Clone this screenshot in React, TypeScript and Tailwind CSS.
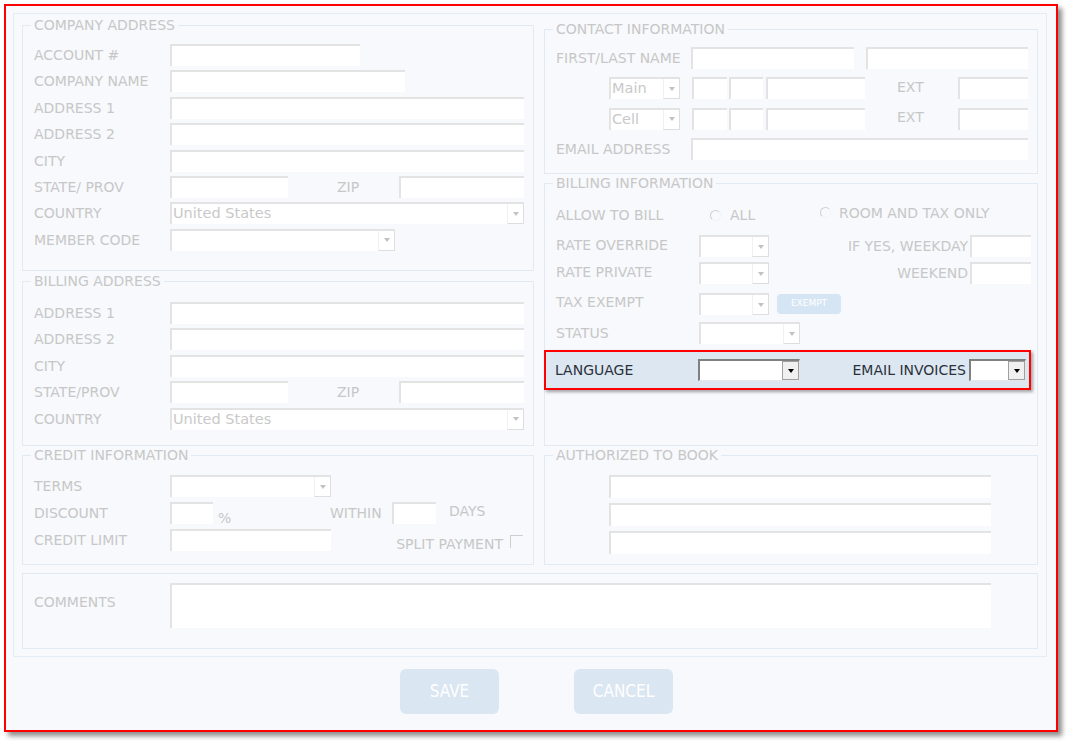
import clsx from "clsx";
import type { ReactNode } from "react";

const Label = ({ children, className }: { children: ReactNode; className?: string }) => (
  <span className={clsx("whitespace-nowrap text-[14px] leading-none text-[#c7c7c7]", className)}>{children}</span>
);

const Box = ({ className }: { className?: string }) => (
  <div className={clsx("h-[22px] shrink-0 border-t-2 border-l-2 border-[#e3e3e3] bg-white", className)} />
);

const Select = ({ value, className }: { value?: string; className?: string }) => (
  <div className={clsx("flex h-[22px] shrink-0 border-t-2 border-l-2 border-[#e3e3e3] bg-white", className)}>
    <span className="flex-1 pl-[1px] text-[14.5px] leading-[19px] text-[#c9c9c9]">{value}</span>
    <span className="flex w-[17px] items-center justify-center border-r border-b border-l border-[#dedede] border-l-[#f1f1f1]">
      <span className="border-x-[3.5px] border-t-[4px] border-x-transparent border-t-[#c2c2c2]" />
    </span>
  </div>
);

const DarkSelect = ({ className }: { className?: string }) => (
  <div className={clsx("flex h-[22px] shrink-0 border-t-2 border-l-2 border-[#808080] border-r border-b border-r-[#e6e6e6] border-b-[#e6e6e6] bg-white", className)}>
    <span className="flex-1" />
    <span className="flex w-[17px] items-center justify-center border border-[#a0a0a0] bg-[#f0f0f0]">
      <span className="border-x-[3.5px] border-t-[4px] border-x-transparent border-t-black" />
    </span>
  </div>
);

const Radio = () => (
  <span className="inline-block h-[11px] w-[11px] shrink-0 rounded-full border border-[#cfcfcf] border-r-[#f3f3f3] border-b-[#f3f3f3]" />
);

const Group = ({ title, className, children }: { title?: string; className?: string; children: ReactNode }) => (
  <fieldset className={clsx("min-w-0 border border-[#e1e9f3] pl-[11px] pr-[9px]", className)}>
    {title && (
      <legend className="-ml-[3px] px-[3px] text-[14px] leading-[14px] text-[#c7c7c7]">{title}</legend>
    )}
    {children}
  </fieldset>
);

const Row = ({ children, className }: { children: ReactNode; className?: string }) => (
  <div className={clsx("flex h-[22px] items-center", className)}>{children}</div>
);

export default function App() {
  return (
    <div className="h-[746px] w-[1071px] bg-white pl-[4px] pt-[4px] font-['DejaVu_Sans','Verdana',sans-serif]">
      <div className="h-[728px] w-[1054px] border-2 border-[#ff0000] bg-[#f7f9fc] pl-[7px] pt-[7px] shadow-[4px_4px_5px_rgba(0,0,0,0.45)]">
        <div className="h-[644px] w-[1034px] border border-[#e4ecf5] px-[8px]">
          <div className="flex gap-[10px]">
            {/* left column */}
            <div className="flex w-[512px] flex-col pt-[4px]">
              <Group title="COMPANY ADDRESS" className="h-[253px]">
                <div className="flex flex-col gap-[4.4px] pt-[12px]">
                  <Row>
                    <Label className="w-[136px]">ACCOUNT #</Label>
                    <Box className="w-[190px]" />
                  </Row>
                  <Row>
                    <Label className="w-[136px]">COMPANY NAME</Label>
                    <Box className="w-[235px]" />
                  </Row>
                  <Row>
                    <Label className="w-[136px]">ADDRESS 1</Label>
                    <Box className="w-[354px]" />
                  </Row>
                  <Row>
                    <Label className="w-[136px]">ADDRESS 2</Label>
                    <Box className="w-[354px]" />
                  </Row>
                  <Row>
                    <Label className="w-[136px]">CITY</Label>
                    <Box className="w-[354px]" />
                  </Row>
                  <Row>
                    <Label className="w-[136px]">STATE/ PROV</Label>
                    <Box className="w-[118px]" />
                    <Label className="w-[111px] pl-[49px]">ZIP</Label>
                    <Box className="w-[125px]" />
                  </Row>
                  <Row>
                    <Label className="w-[136px]">COUNTRY</Label>
                    <Select value="United States" className="w-[354px]" />
                  </Row>
                  <Row>
                    <Label className="w-[136px]">MEMBER CODE</Label>
                    <Select className="w-[225px]" />
                  </Row>
                </div>
              </Group>

              <Group title="BILLING ADDRESS" className="mt-[3px] h-[172px]">
                <div className="flex flex-col gap-[4.4px] pt-[14px]">
                  <Row>
                    <Label className="w-[136px]">ADDRESS 1</Label>
                    <Box className="w-[354px]" />
                  </Row>
                  <Row>
                    <Label className="w-[136px]">ADDRESS 2</Label>
                    <Box className="w-[354px]" />
                  </Row>
                  <Row>
                    <Label className="w-[136px]">CITY</Label>
                    <Box className="w-[354px]" />
                  </Row>
                  <Row>
                    <Label className="w-[136px]">STATE/PROV</Label>
                    <Box className="w-[118px]" />
                    <Label className="w-[111px] pl-[49px]">ZIP</Label>
                    <Box className="w-[125px]" />
                  </Row>
                  <Row>
                    <Label className="w-[136px]">COUNTRY</Label>
                    <Select value="United States" className="w-[354px]" />
                  </Row>
                </div>
              </Group>

              <Group title="CREDIT INFORMATION" className="mt-[2px] h-[117px]">
                <div className="flex flex-col gap-[5px] pt-[13px]">
                  <Row>
                    <Label className="w-[136px]">TERMS</Label>
                    <Select className="w-[161px]" />
                  </Row>
                  <Row>
                    <Label className="w-[136px]">DISCOUNT</Label>
                    <Box className="w-[43px]" />
                    <Label className="mt-[10px] w-[117px] pl-[5px]">%</Label>
                    <Label className="w-[62px]">WITHIN</Label>
                    <Box className="w-[44px]" />
                    <Label className="-mt-[4px] pl-[13px]">DAYS</Label>
                  </Row>
                  <Row>
                    <Label className="w-[136px]">CREDIT LIMIT</Label>
                    <Box className="w-[161px]" />
                    <Label className="ml-auto mt-[7px]">SPLIT PAYMENT</Label>
                    <span className="mt-[3px] ml-[7px] mr-[1px] h-[13px] w-[13px] border-t border-l border-[#cfcfcf]" />
                  </Row>
                </div>
              </Group>
            </div>

            {/* right column */}
            <div className="flex w-[494px] flex-col pt-[8px]">
              <Group title="CONTACT INFORMATION" className="h-[152px]">
                <div className="flex flex-col gap-[8.3px] pt-[11px]">
                  <Row>
                    <Label className="w-[136px]">FIRST/LAST NAME</Label>
                    <Box className="w-[163px]" />
                    <Box className="ml-[12px] w-[162px]" />
                  </Row>
                  {["Main", "Cell"].map((t) => (
                    <Row key={t}>
                      <Select value={t} className="ml-[53px] w-[71px]" />
                      <Box className="ml-[12px] w-[35px]" />
                      <Box className="ml-[2px] w-[34px]" />
                      <Box className="ml-[3px] w-[99px]" />
                      <Label className="ml-[32px] mb-[3px] w-[62px]">EXT</Label>
                      <Box className="w-[70px]" />
                    </Row>
                  ))}
                  <Row>
                    <Label className="w-[136px]">EMAIL ADDRESS</Label>
                    <Box className="w-[337px]" />
                  </Row>
                </div>
              </Group>

              <Group title="BILLING INFORMATION" className="mt-[2px] h-[270px]">
                <div className="flex flex-col pt-[14px]">
                  <Row>
                    <Label className="w-[154px]">ALLOW TO BILL</Label>
                    <div className="flex w-[110px] items-center gap-[9px]">
                      <Radio />
                      <Label>ALL</Label>
                    </div>
                    <div className="-mt-[5px] flex items-center gap-[8px]">
                      <Radio />
                      <Label>ROOM AND TAX ONLY</Label>
                    </div>
                  </Row>
                  <Row className="mt-[9px]">
                    <Label className="mb-[3px] w-[143px]">RATE OVERRIDE</Label>
                    <Select className="w-[70px]" />
                    <Label className="flex-1 text-right">IF YES, WEEKDAY</Label>
                    <Box className="-mr-[3px] ml-[2px] w-[61px]" />
                  </Row>
                  <Row className="mt-[5px]">
                    <Label className="mb-[3px] w-[143px]">RATE PRIVATE</Label>
                    <Select className="w-[70px]" />
                    <Label className="flex-1 text-right">WEEKEND</Label>
                    <Box className="-mr-[3px] ml-[2px] w-[61px]" />
                  </Row>
                  <Row className="mt-[9px]">
                    <Label className="mb-[5px] w-[143px]">TAX EXEMPT</Label>
                    <Select className="w-[70px]" />
                    <span className="ml-[8px] flex h-[20px] w-[64px] items-center justify-center rounded-[4px] bg-[#d6e5f3] text-[9px] text-white">
                      EXEMPT
                    </span>
                  </Row>
                  <Row className="mt-[7px]">
                    <Label className="w-[143px]">STATUS</Label>
                    <Select className="w-[101px]" />
                  </Row>
                  <div className="-ml-[12px] mt-[6px] flex h-[40px] w-[487px] items-center border-2 border-[#ff0000] bg-[#dde7f2] pl-[9px] shadow-[2px_2px_3px_rgba(0,0,0,0.35)]">
                    <span className="w-[143px] text-[14px] leading-none text-[#2b313a]">LANGUAGE</span>
                    <DarkSelect className="w-[102px]" />
                    <span className="flex-1 text-right text-[14px] leading-none text-[#2b313a]">EMAIL INVOICES</span>
                    <DarkSelect className="ml-[3px] mr-[3px] w-[57px]" />
                  </div>
                </div>
              </Group>

              <Group title="AUTHORIZED TO BOOK" className="mt-[2px] h-[117px]">
                <div className="flex flex-col gap-[5px] pt-[13px]">
                  <Box className="ml-[53px] h-[23px] w-[382px]" />
                  <Box className="ml-[53px] h-[23px] w-[382px]" />
                  <Box className="ml-[53px] h-[23px] w-[382px]" />
                </div>
              </Group>
            </div>
          </div>

          <Group className="mt-[8px] h-[76px]">
            <div className="flex items-center pt-[9px]">
              <Label className="mb-[7px] w-[136px]">COMMENTS</Label>
              <div className="h-[45px] w-[821px] border-t-2 border-l-2 border-[#e3e3e3] bg-white" />
            </div>
          </Group>
        </div>

        <div className="mt-[12px] flex gap-[75px] pl-[387px] font-['DejaVu_Sans_Condensed','Liberation_Sans_Narrow','Roboto',sans-serif]">
          <button className="flex h-[45px] w-[99px] items-center justify-center rounded-[6px] bg-[#dae6f2] text-[17px] text-white [font-stretch:condensed]">
            SAVE
          </button>
          <button className="flex h-[45px] w-[99px] items-center justify-center rounded-[6px] bg-[#dae6f2] text-[17px] text-white [font-stretch:condensed]">
            CANCEL
          </button>
        </div>
      </div>
    </div>
  );
}
